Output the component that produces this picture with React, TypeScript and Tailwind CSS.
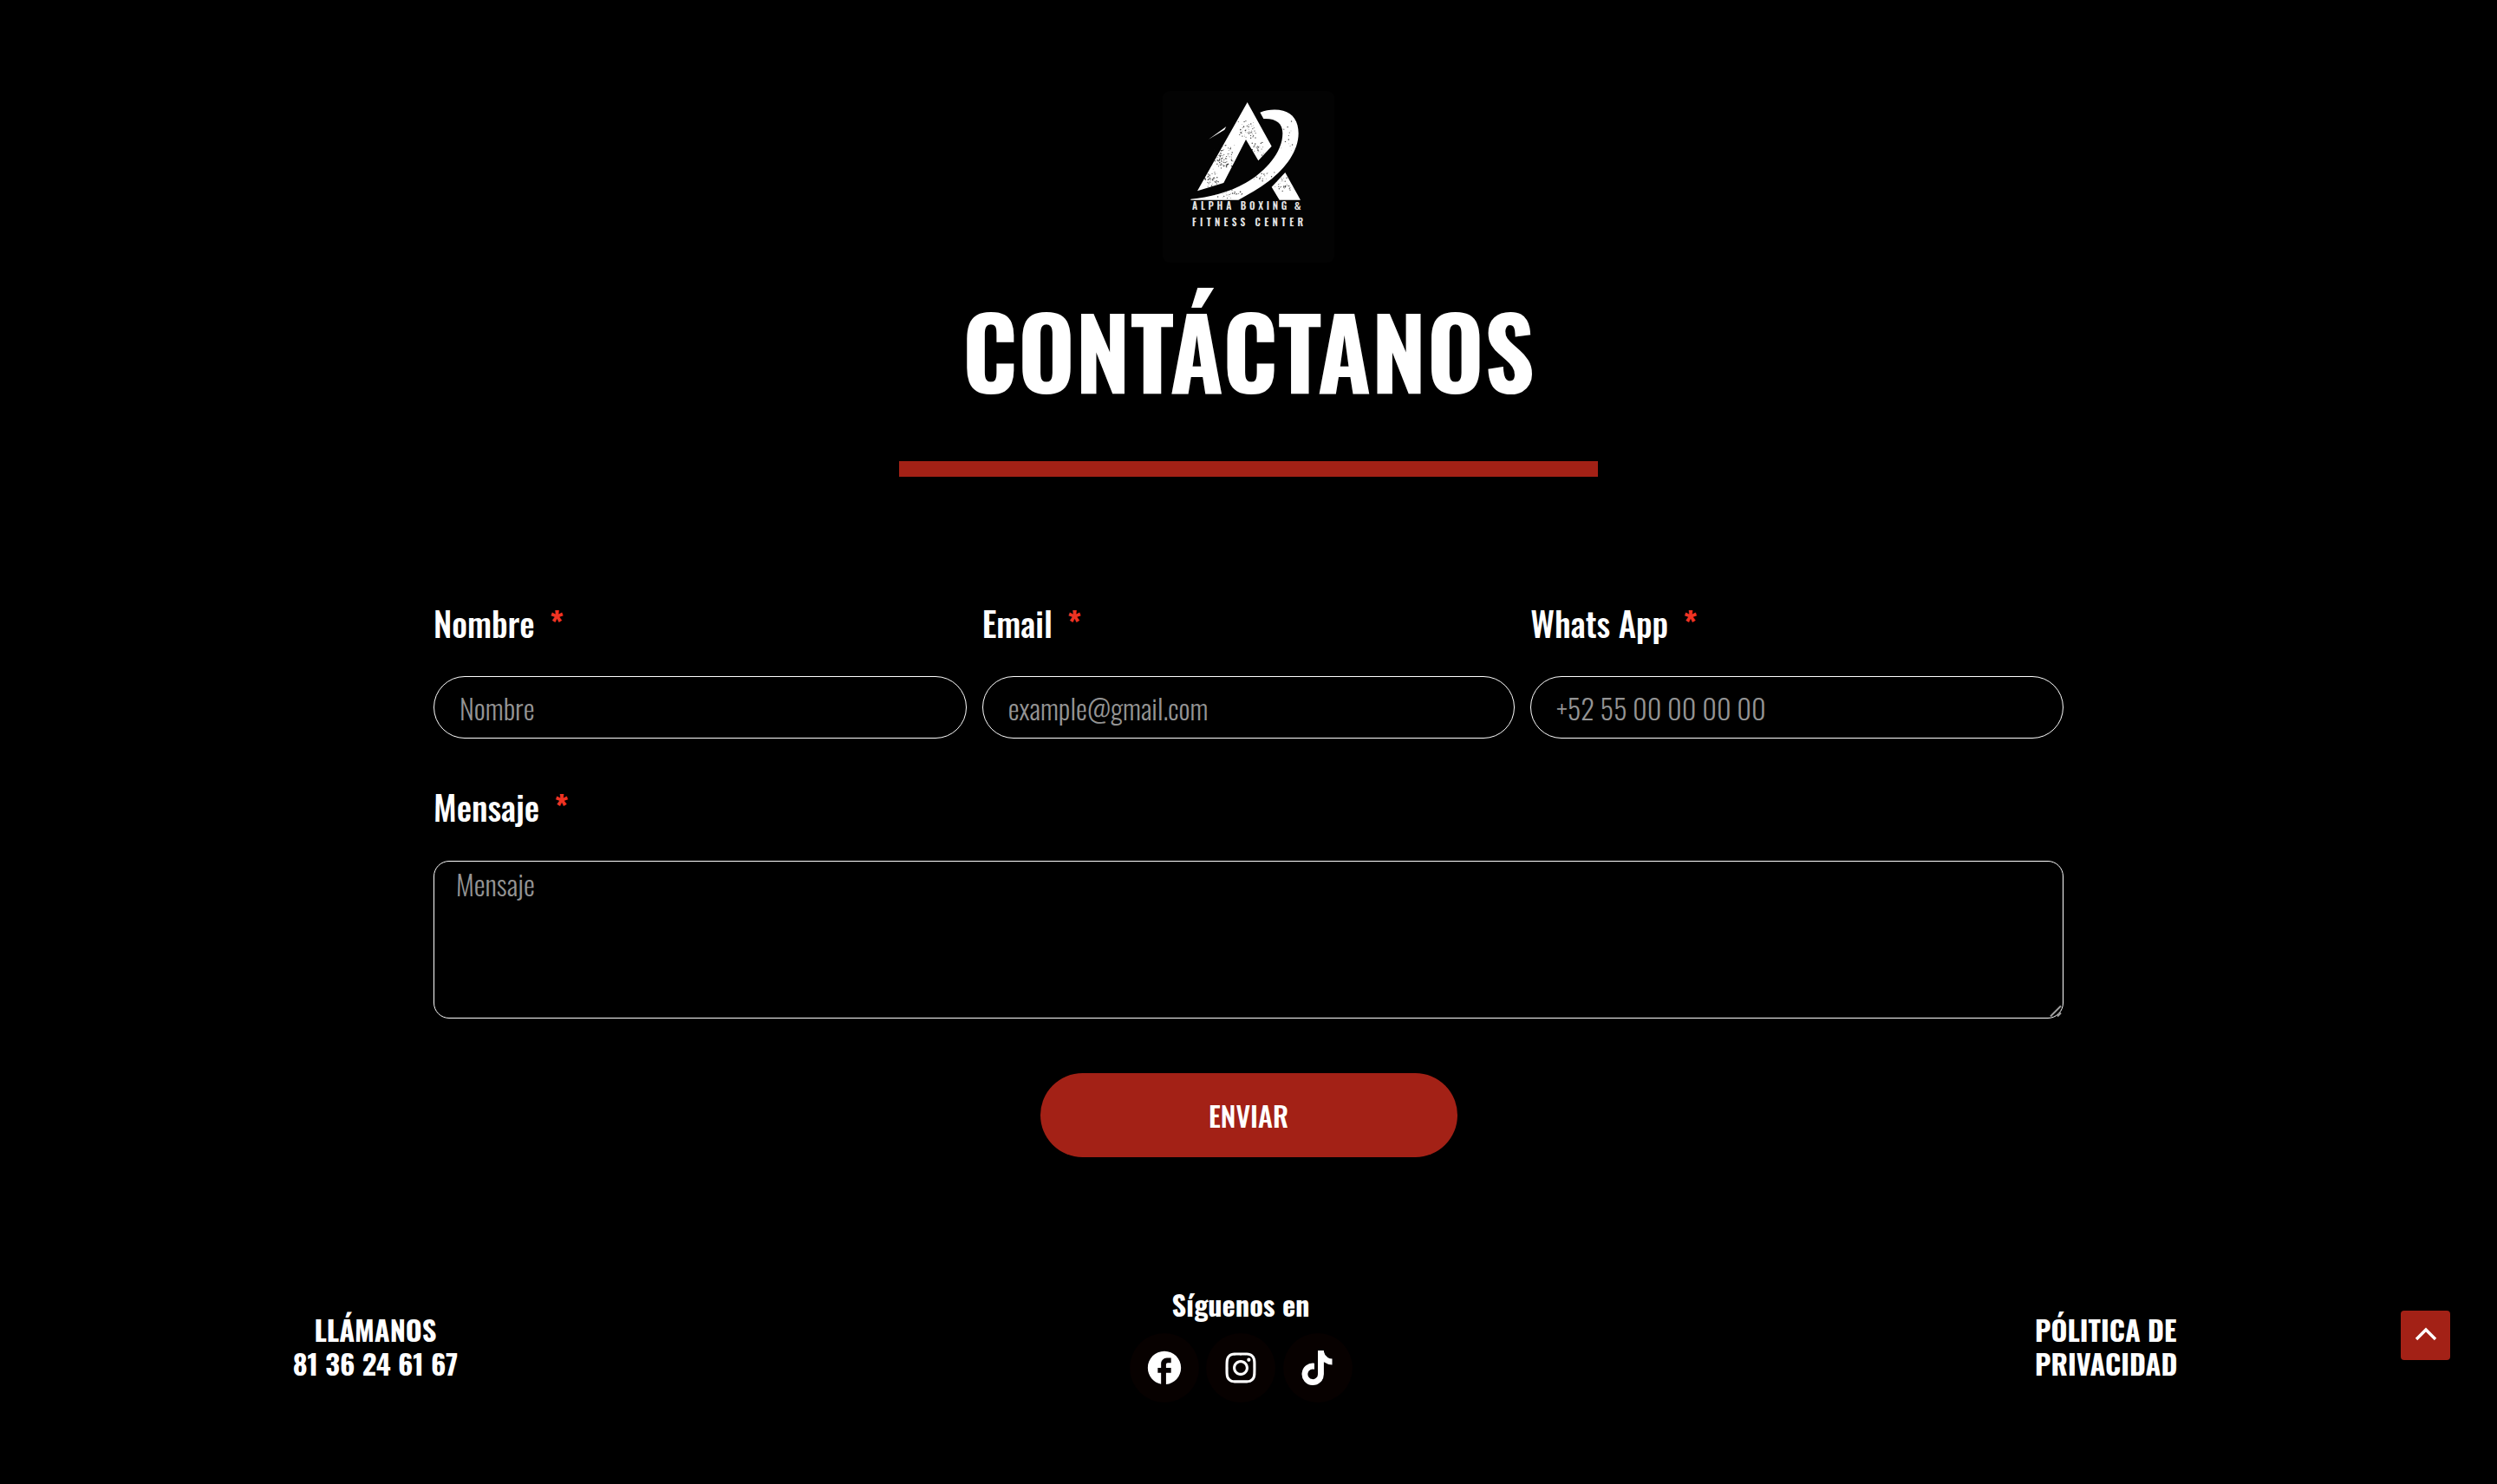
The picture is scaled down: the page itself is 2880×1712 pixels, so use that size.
import { FaInstagram, FaTiktok } from "react-icons/fa6"
import { MdFacebook } from "react-icons/md"

const fields = [
  { label: "Nombre", type: "text", placeholder: "Nombre" },
  { label: "Email", type: "email", placeholder: "example@gmail.com" },
  { label: "Whats App", type: "tel", placeholder: "+52 55 00 00 00 00" },
]

// Worn-ink specks over the logo strokes: [cx, cy, spread x, spread y, count]
const wornAreas = [
  [270, 275, 46, 50, 110],
  [225, 350, 36, 28, 55],
  [355, 180, 34, 34, 50],
  [395, 240, 30, 28, 25],
  [400, 335, 50, 26, 26],
  [480, 372, 30, 40, 34],
  [290, 400, 70, 18, 30],
  [495, 200, 28, 60, 14],
]

function specks() {
  let seed = 7
  const rand = () => {
    seed = (seed * 16807) % 2147483647
    return seed / 2147483647
  }
  return wornAreas.flatMap(([cx, cy, sx, sy, n]) =>
    Array.from({ length: n }, () => ({
      x: cx + (rand() + rand() - 1) * sx,
      y: cy + (rand() + rand() - 1) * sy,
      r: 0.8 + rand() * 1.6,
    })),
  )
}

function Logo() {
  return (
    <svg viewBox="63 44 594 594" className="h-[198px] w-[198px] rounded-lg bg-[#030303]">
      <g fill="#fff">
        <path d="M356 83 L440 235 L394 285 L351 212 L274 362 L183 390 Z" />
        <path d="M400 118 C425 108 455 106 480 112 C515 121 533 150 533 190 C533 250 490 310 430 356 C395 382 360 402 325 421 L160 421 L160 418 C225 412 290 396 350 362 C420 322 478 255 478 190 C478 155 455 138 412 140 Z" />
        <path d="M487 326 L540 421 L467 421 L440 376 Z" />
        <path d="M222 211 L283 167 L277 178 Z" />
      </g>
      <g fill="#0a0a0a" opacity="0.75">
        {specks().map((s, i) => (
          <circle key={i} cx={s.x} cy={s.y} r={s.r} />
        ))}
      </g>
      <g fill="#e5e5e5" fontFamily="Oswald, sans-serif" fontWeight="600" fontSize="34">
        <text x="165" y="455" textLength="328">
          ALPHA BOXING
        </text>
        <text x="518" y="455" fontFamily="Roboto, sans-serif" fontSize="36">
          &amp;
        </text>
        <text x="165" y="511" textLength="384">
          FITNESS CENTER
        </text>
      </g>
    </svg>
  )
}

function Label({ children }: { children: string }) {
  return (
    <label className="flex h-[60px] items-center gap-[17px] text-[39px] leading-[60px] font-medium text-white">
      {children}
      <span className="font-semibold text-[#ef3323]">*</span>
    </label>
  )
}

export default function App() {
  return (
    <main className="min-h-[1712px] w-full bg-black pt-[105px] font-['Oswald',sans-serif] text-white">
      <header className="flex flex-col items-center">
        <Logo />
        <h1 className="mt-[42px] text-[113.4px] leading-[116px] font-bold">CONTÁCTANOS</h1>
        <div className="mt-[71px] h-[18px] w-[806px] bg-[#a32116]" />
      </header>

      <form className="mx-auto mt-[138px] flex w-[1880px] flex-col">
        <div className="grid grid-cols-3 gap-[18px]">
          {fields.map((f) => (
            <div key={f.label}>
              <Label>{f.label}</Label>
              <input
                type={f.type}
                placeholder={f.placeholder}
                className="mt-8 block h-[72px] w-full rounded-[36px] border border-white bg-transparent px-[29px] text-[32.4px] font-light placeholder:text-[#949494]"
              />
            </div>
          ))}
        </div>

        <div className="mt-12">
          <Label>Mensaje</Label>
          <div className="relative mt-[33px]">
            <textarea
              placeholder="Mensaje"
              className="block h-[182px] w-full resize-none rounded-[18px] border border-white bg-transparent px-[25px] pt-px text-[32.4px] leading-[48px] font-light placeholder:text-[#949494]"
            />
            <svg viewBox="0 0 16 16" className="absolute right-0 bottom-0 h-4 w-4 stroke-[#a0a0a0]" strokeWidth="2">
              <path d="M1 13.5 L13 1.5 M9 13.5 L13 9.5" />
            </svg>
          </div>
        </div>

        <button
          type="button"
          className="mt-[63px] h-[97px] w-[481px] self-center rounded-full bg-[#a32116] text-[32.4px] font-medium"
        >
          ENVIAR
        </button>
      </form>

      <footer className="mt-[150px] flex items-start pl-[337px] text-[32.4px] leading-[39px] font-bold">
        <p className="mt-[29px] w-[192px] text-center">
          LLÁMANOS
          <br />
          81 36 24 61 67
        </p>
        <div className="ml-[773px] flex w-[258px] flex-col items-center">
          <p>Síguenos en</p>
          <div className="mt-[14px] flex gap-[8.5px]">
            <a className="flex size-20 items-center justify-center rounded-full bg-[#070100]">
              <MdFacebook size={46} />
            </a>
            <a className="flex size-20 items-center justify-center rounded-full bg-[#070100]">
              <FaInstagram size={40} />
            </a>
            <a className="flex size-20 items-center justify-center rounded-full bg-[#070100] pr-0.5 pb-px">
              <FaTiktok size={40} />
            </a>
          </div>
        </div>
        <p className="mt-[29px] ml-[787px] w-[165px] whitespace-nowrap">
          PÓLITICA DE
          <br />
          PRIVACIDAD
        </p>
        <button
          type="button"
          className="mt-[27px] ml-[257px] flex size-[57px] items-center justify-center rounded bg-[#a32116]"
        >
          <svg viewBox="0 0 26 16" className="mb-1 h-4 w-[26px]" fill="none" stroke="#fff" strokeWidth="3.4">
            <path d="M2 14 L13 3 L24 14" />
          </svg>
        </button>
      </footer>
    </main>
  )
}
